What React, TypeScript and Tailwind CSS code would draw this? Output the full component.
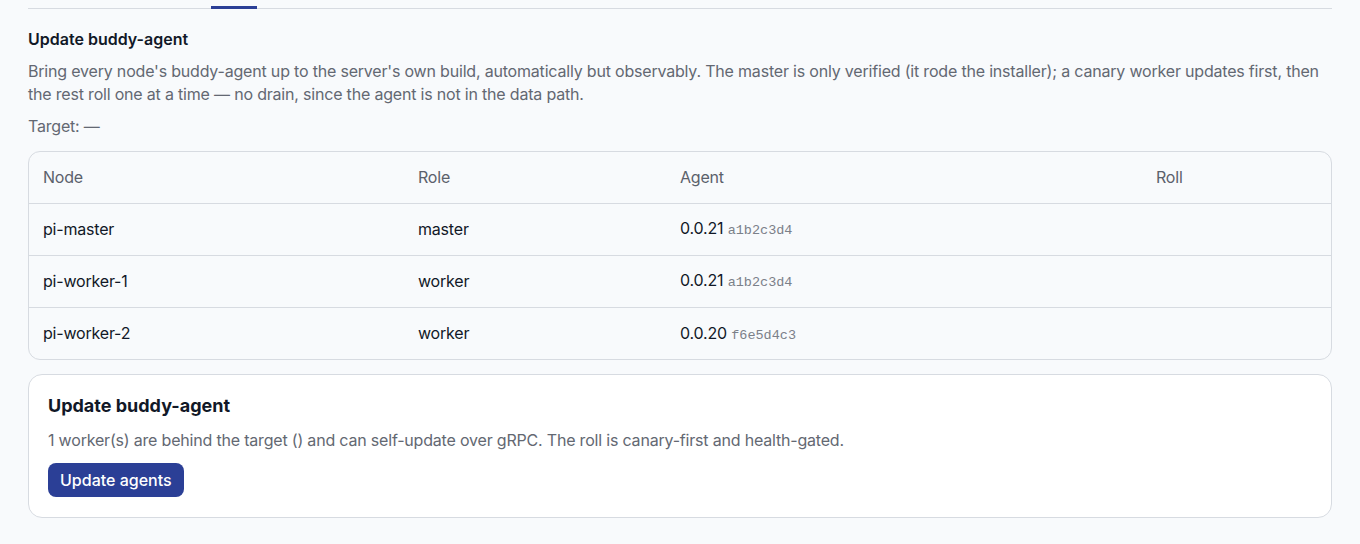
import React from "react";

const rows = [
  { node: "pi-master", role: "master", version: "0.0.21", hash: "a1b2c3d4" },
  { node: "pi-worker-1", role: "worker", version: "0.0.21", hash: "a1b2c3d4" },
  { node: "pi-worker-2", role: "worker", version: "0.0.20", hash: "f6e5d4c3" },
];

export default function App() {
  return (
    <div className="min-h-screen bg-[#f8fafc] px-7 font-['Inter',sans-serif] tracking-[-0.012em] text-[#111827]">
      {/* Tab strip (scrolled) */}
      <div className="relative h-[9px] border-b border-[#d7dbe1]">
        <div className="absolute bottom-[-1px] left-[183px] h-[3px] w-[46px] bg-[#2b3f96]" />
      </div>

      <h2 className="mt-[20px] text-[16px] font-semibold leading-[20px] tracking-normal">Update buddy-agent</h2>
      <p className="mt-[11px] text-[16px] leading-[23px] text-[#636872]">
        Bring every node's buddy-agent up to the server's own build, automatically but observably. The
        master is only verified (it rode the installer); a canary worker updates first, then the rest
        roll one at a time — no drain, since the agent is not in the data path.
      </p>
      <p className="mt-[9px] text-[16px] leading-[23px] text-[#636872]">Target: —</p>

      {/* Nodes table */}
      <div className="mt-[13px] overflow-hidden rounded-xl border border-[#d7dbe1]">
        <table className="w-full table-fixed border-collapse text-left text-[16px]">
          <colgroup>
            <col className="w-[375px]" />
            <col className="w-[262px]" />
            <col className="w-[476px]" />
            <col />
          </colgroup>
          <thead>
            <tr className="h-[51px] text-[#5b616b]">
              <th className="px-[14px] font-normal">Node</th>
              <th className="px-[14px] font-normal">Role</th>
              <th className="px-[14px] font-normal">Agent</th>
              <th className="px-[14px] font-normal">Roll</th>
            </tr>
          </thead>
          <tbody>
            {rows.map((r) => (
              <tr key={r.node} className="h-[52px] border-t border-[#d7dbe1]">
                <td className="px-[14px]">{r.node}</td>
                <td className="px-[14px]">{r.role}</td>
                <td className="px-[14px]">
                  {r.version}{" "}
                  <span className="font-['Liberation_Mono',monospace] text-[13.5px] tracking-normal text-[#7b8089]">
                    {r.hash}
                  </span>
                </td>
                <td className="px-[14px]" />
              </tr>
            ))}
          </tbody>
        </table>
      </div>

      {/* Update card */}
      <div className="mt-[14px] rounded-[14px] border border-[#d7dbe1] bg-white px-[19px] pb-[20px] pt-[19px]">
        <h3 className="text-[18px] font-bold leading-[24px] tracking-normal">Update buddy-agent</h3>
        <p className="mt-[11px] text-[16px] leading-[22px] text-[#636872]">
          1 worker(s) are behind the target () and can self-update over gRPC. The roll is canary-first and
          health-gated.
        </p>
        <button className="mt-[12px] h-[34px] rounded-lg bg-[#2b3f96] px-3 text-[16px] font-medium tracking-normal text-white">
          Update agents
        </button>
      </div>
    </div>
  );
}
